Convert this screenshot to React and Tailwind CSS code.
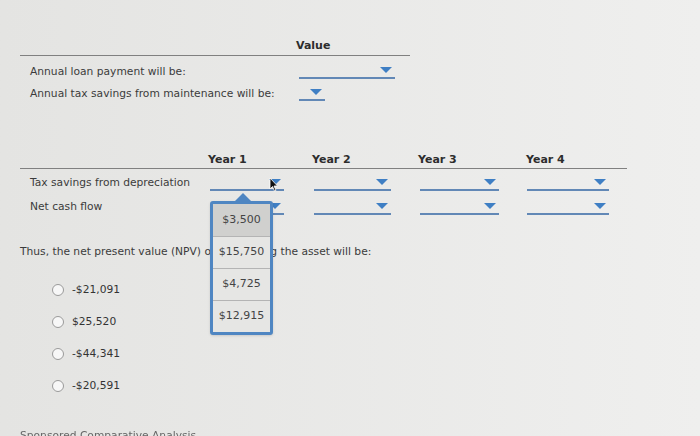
import React from 'react';

const font = { fontFamily: '"DejaVu Sans", Verdana, sans-serif' };

const Dropdown = ({ width }) => (
    <div className="h-[13px] border-b-2 border-[#6288b6] flex justify-end items-start pr-[3px]" style={{ width }}>
        <svg width="12" height="6" viewBox="0 0 12 6" className="mt-[1px]">
            <path d="M0 0 L12 0 L6 6 Z" fill="#3f7fc4" />
        </svg>
    </div>
);

const options = ['-$21,091', '$25,520', '-$44,341', '-$20,591'];
const popupItems = ['$3,500', '$15,750', '$4,725', '$12,915'];
const yearWidths = [104, 106, 108, 100];
const dropWidths = [74, 77, 79, 82];

const App = () => {
    return (
        <div className="relative w-[700px] h-[436px] overflow-hidden bg-gradient-to-r from-[#e4e4e2] to-[#efefee] text-[#3b3b3b] text-[10.7px]" style={font}>
            {/* value table */}
            <div className="ml-[20px] w-[390px] pt-[39px]">
                <div className="h-[17px] border-b border-[#808080] pl-[276px] pb-[3px] font-bold text-[11px] text-[#2d2d2d] leading-[14px]">
                    Value
                </div>
                <div className="mt-[5px] h-[22px] flex items-center pl-[10px]">
                    <span className="w-[269px]">Annual loan payment will be:</span>
                    <Dropdown width={96} />
                </div>
                <div className="h-[22px] flex items-center pl-[10px]">
                    <span className="w-[269px]">Annual tax savings from maintenance will be:</span>
                    <Dropdown width={26} />
                </div>
            </div>

            {/* cash flow table */}
            <div className="ml-[20px] w-[607px] mt-[48px]">
                <div className="h-[16px] border-b border-[#808080] flex pl-[188px] font-bold text-[11px] text-[#2d2d2d] leading-[14px]">
                    {['Year 1', 'Year 2', 'Year 3', 'Year 4'].map((y, i) => (
                        <div key={y} style={{ width: yearWidths[i] }}>{y}</div>
                    ))}
                </div>
                {['Tax savings from depreciation', 'Net cash flow'].map((label, r) => (
                    <div key={label} className={`h-[24px] flex items-center pl-[10px] ${r === 0 ? 'mt-[2px]' : ''}`}>
                        <span className="w-[181px]">{label}</span>
                        {dropWidths.map((w, i) => (
                            <div key={i} className="pt-[3px]" style={{ width: yearWidths[i] }}>
                                <Dropdown width={w} />
                            </div>
                        ))}
                    </div>
                ))}
            </div>

            <p className="ml-[20px] mt-[26px] leading-[14px]">
                Thus, the net present value (NPV) of purchasing the asset will be:
            </p>

            <div className="mt-[15px] ml-[52px] flex flex-col">
                {options.map((o) => (
                    <label key={o} className="h-[32px] flex items-center gap-[8px]">
                        <span className="w-[12px] h-[12px] rounded-full border border-[#9a9a9a] bg-[#f7f7f7]" />
                        <span className="text-[#333]">{o}</span>
                    </label>
                ))}
            </div>

            <div className="mt-[26px] ml-[20px] text-[#666] blur-[0.6px]">Sponsored Comparative Analysis</div>

            {/* open dropdown menu */}
            <div className="absolute left-[210px] top-[193px] w-[63px]">
                <div className="flex justify-center pl-[2px] h-[8px]">
                    <svg width="16" height="8" viewBox="0 0 16 8">
                        <path d="M0 8 L8 0 L16 8 Z" fill="#4f86c2" />
                    </svg>
                </div>
                <div className="border-[3px] border-[#4f86c2] rounded-[3px] bg-[#e6e6e4] shadow-sm">
                    {popupItems.map((v, i) => (
                        <div
                            key={v}
                            className={`h-[32px] flex items-center justify-center text-[11px] text-[#444] ${i === 0 ? 'bg-[#d0d0ce]' : 'border-t border-[#b4b4b4]'}`}
                        >
                            {v}
                        </div>
                    ))}
                </div>
            </div>

            {/* mouse pointer */}
            <svg className="absolute left-[269px] top-[177px]" width="10" height="15" viewBox="0 0 10 15">
                <path d="M1 1 L1 12 L3.5 9.5 L5.5 14 L7 13.3 L5 9 L8.5 9 Z" fill="#111" stroke="#fff" strokeWidth="0.8" />
            </svg>
        </div>
    );
};

export default App;
